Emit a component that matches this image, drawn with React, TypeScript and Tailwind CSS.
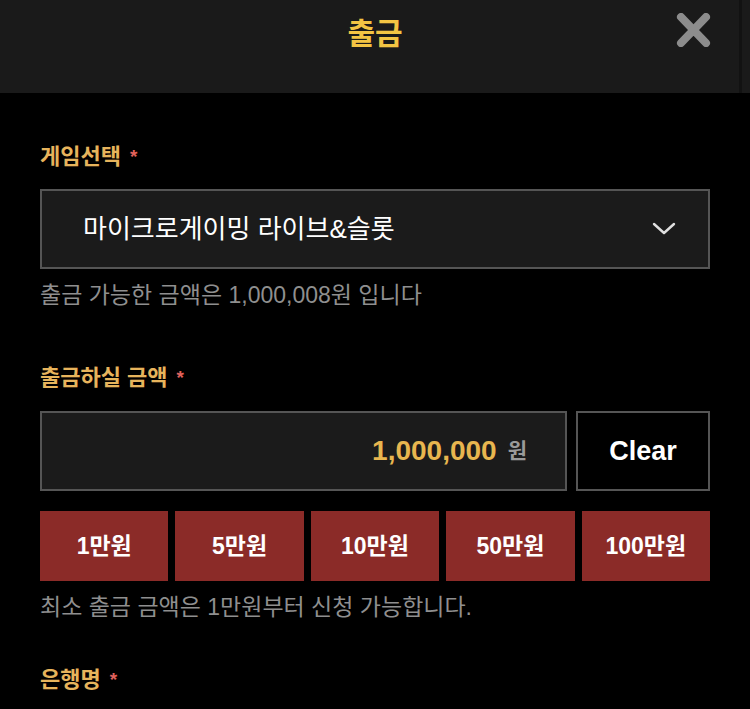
const amounts = ["1만원", "5만원", "10만원", "50만원", "100만원"];

function Label({ text }: { text: string }) {
  return (
    <div className="flex items-center gap-[9px] text-[22px] leading-[28px] font-bold text-[#e7b45c]">
      <span>{text}</span>
      <span className="text-[#e0625c] text-[19px]">*</span>
    </div>
  );
}

export default function App() {
  return (
    <div
      className="w-[750px] h-[709px] overflow-hidden bg-black"
      style={{ fontFamily: '"Liberation Sans", "Noto Sans CJK KR", sans-serif' }}
    >
      <header className="relative h-[93px] bg-[#1a1a1a] flex items-start justify-center">
        <h1 className="mt-[13px] text-[30px] leading-[42px] font-bold text-[#f3c443]">출금</h1>
        <button className="absolute left-[676px] top-[13px] w-[35px] h-[34px]">
          <svg viewBox="0 0 35 34" className="w-full h-full">
            <path d="M5 4 L30 30 M30 4 L5 30" stroke="#8c8c8c" strokeWidth="8" strokeLinecap="round" />
          </svg>
        </button>
        <div className="absolute left-[739px] top-0 w-[3px] h-full bg-[#121212]" />
      </header>

      <main className="px-[40px] pt-[50px] flex flex-col">
        <Label text="게임선택" />
        <div className="mt-[18px] h-[80px] border-2 border-[#555] bg-[#1b1b1b] flex items-center justify-between pl-[41px] pr-[32px]">
          <span className="text-[26px] text-white">마이크로게이밍 라이브&슬롯</span>
          <svg viewBox="0 0 24 14" className="w-[24px] h-[14px]">
            <path d="M2 2 L12 11 L22 2" stroke="#e0e0e0" strokeWidth="2.4" fill="none" strokeLinecap="round" strokeLinejoin="round" />
          </svg>
        </div>
        <p className="mt-[12px] text-[23px] leading-[28px] text-[#8f8f8f]">출금 가능한 금액은 1,000,008원 입니다</p>

        <div className="mt-[55px]">
          <Label text="출금하실 금액" />
        </div>
        <div className="mt-[19px] flex gap-[9px] h-[80px]">
          <div className="flex-1 border-2 border-[#555] bg-[#1b1b1b] flex items-center justify-end pr-[38px] gap-[11px]">
            <span className="text-[28px] font-bold text-[#e8b64f]">1,000,000</span>
            <span className="text-[21px] font-bold text-[#9a9a9a]">원</span>
          </div>
          <button className="w-[134px] border-2 border-[#555] bg-black text-white text-[27px] font-bold">Clear</button>
        </div>

        <div className="mt-[20px] grid grid-cols-5 gap-[7px] h-[70px]">
          {amounts.map((a) => (
            <button key={a} className="bg-[#8b2b28] text-white text-[23px] font-bold">
              {a}
            </button>
          ))}
        </div>
        <p className="mt-[12px] text-[23px] leading-[28px] text-[#8f8f8f]">최소 출금 금액은 1만원부터 신청 가능합니다.</p>

        <div className="mt-[45px]">
          <Label text="은행명" />
        </div>
      </main>
    </div>
  );
}
